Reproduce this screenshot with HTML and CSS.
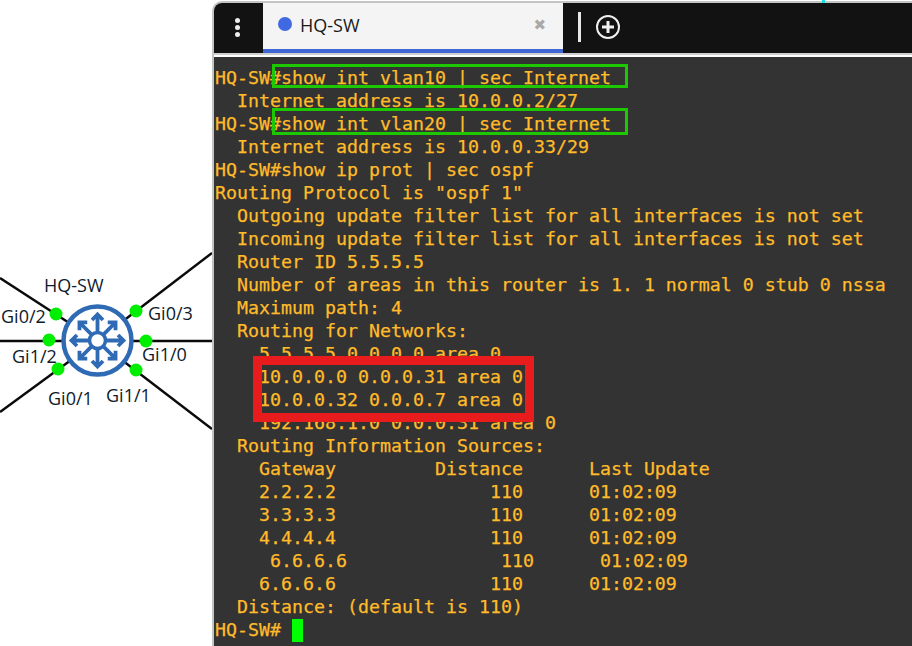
FILE: index.html
```html
<!DOCTYPE html>
<html lang="en">
<head>
<meta charset="utf-8">
<title>HQ-SW</title>
<link rel="stylesheet" href="styles.css">
</head>
<body>
<div class="page">
  <div class="canvas">
    <svg class="topo" width="212" height="646" viewBox="0 0 212 646">
      <g class="links">
        <line x1="0" y1="278" x2="97" y2="341"/>
        <line x1="0" y1="341" x2="212" y2="341"/>
        <line x1="0" y1="412" x2="97" y2="341"/>
        <line x1="212" y1="253" x2="97" y2="341"/>
        <line x1="212" y1="429" x2="97" y2="341"/>
      </g>
      <circle class="ring" cx="97.500" cy="340.500" r="34"/>
      <g class="arrows" transform="translate(97.500 340.500)">
        <path d="M0 -9V-25M-5.500 -20.500L0 -26L5.500 -20.500"/>
        <path transform="rotate(45)" d="M0 -9V-24M-5.500 -20L0 -25.500L5.500 -20"/>
        <path transform="rotate(90)" d="M0 -9V-25M-5.500 -20.500L0 -26L5.500 -20.500"/>
        <path transform="rotate(135)" d="M0 -9V-24M-5.500 -20L0 -25.500L5.500 -20"/>
        <path transform="rotate(180)" d="M0 -9V-25M-5.500 -20.500L0 -26L5.500 -20.500"/>
        <path transform="rotate(225)" d="M0 -9V-24M-5.500 -20L0 -25.500L5.500 -20"/>
        <path transform="rotate(270)" d="M0 -9V-25M-5.500 -20.500L0 -26L5.500 -20.500"/>
        <path transform="rotate(315)" d="M0 -9V-24M-5.500 -20L0 -25.500L5.500 -20"/>
        <circle class="hub" r="8"/>
      </g>
      <g class="ports">
        <circle cx="56" cy="314" r="6.500"/>
        <circle cx="49" cy="340" r="6.500"/>
        <circle cx="58" cy="369" r="6.500"/>
        <circle cx="136" cy="311" r="6.500"/>
        <circle cx="146" cy="341" r="6.500"/>
        <circle cx="136" cy="370" r="6.500"/>
      </g>
      <g class="labels">
        <text x="44" y="292">HQ-SW</text>
        <text x="1" y="323">Gi0/2</text>
        <text x="148" y="320">Gi0/3</text>
        <text x="12" y="363">Gi1/2</text>
        <text x="142" y="361">Gi1/0</text>
        <text x="48" y="405">Gi0/1</text>
        <text x="106" y="402">Gi1/1</text>
      </g>
    </svg>
  </div>
  <div class="window">
    <div class="bar">
      <div class="menu"><span></span><span></span><span></span></div>
      <div class="tab">
        <span class="tab-dot"></span>
        <span class="tab-title">HQ-SW</span>
        <span class="tab-close">✖</span>
      </div>
      <div class="bar-sep"></div>
      <svg class="add" width="26" height="26" viewBox="0 0 26 26">
        <circle cx="13" cy="13" r="11" />
        <path d="M13 7V19M7 13H19"/>
      </svg>
    </div>
    <div class="terminal">
<pre class="screen">HQ-SW#show int vlan10 | sec Internet
  Internet address is 10.0.0.2/27
HQ-SW#show int vlan20 | sec Internet
  Internet address is 10.0.0.33/29
HQ-SW#show ip prot | sec ospf
Routing Protocol is "ospf 1"
  Outgoing update filter list for all interfaces is not set
  Incoming update filter list for all interfaces is not set
  Router ID 5.5.5.5
  Number of areas in this router is 1. 1 normal 0 stub 0 nssa
  Maximum path: 4
  Routing for Networks:
    5.5.5.5 0.0.0.0 area 0
    10.0.0.0 0.0.0.31 area 0
    10.0.0.32 0.0.0.7 area 0
    192.168.1.0 0.0.0.31 area 0
  Routing Information Sources:
    Gateway         Distance      Last Update
    2.2.2.2              110      01:02:09
    3.3.3.3              110      01:02:09
    4.4.4.4              110      01:02:09
     6.6.6.6              110      01:02:09
    6.6.6.6              110      01:02:09
  Distance: (default is 110)
HQ-SW# <span class="cursor"></span></pre>
      <div class="mark mark-a"></div>
      <div class="mark mark-b"></div>
      <div class="mark-red"></div>
    </div>
  </div>
  <div class="speck"></div>
</div>
</body>
</html>
```
FILE: styles.css
```css
html, body { margin: 0; padding: 0; background: #fff; }
.page {
  position: relative;
  display: flex;
  width: 912px;
  height: 646px;
  overflow: hidden;
  background: #fff;
}
.canvas { width: 212px; flex: none; }
.topo { display: block; }
.links line { stroke: #0b0b0b; stroke-width: 2.500; }
.ring { fill: #fff; stroke: #2f6ab5; stroke-width: 4.500; }
.arrows path { fill: none; stroke: #2f6ab5; stroke-width: 3.800; }
.hub { fill: #fff; stroke: #2f6ab5; stroke-width: 3.500; }
.ports circle { fill: #00ee00; }
.labels text { font: 18px "Open Sans", "Noto Sans", sans-serif; fill: #0f1a2b; }

.window {
  flex: 1;
  display: flex;
  flex-direction: column;
  margin-top: 1px;
  border-top: 2px solid #c4c4c4;
  border-left: 2px solid #c4c4c4;
  border-top-left-radius: 10px;
  background: #fff;
  overflow: hidden;
}
.bar {
  display: flex;
  align-items: center;
  height: 50px;
  flex: none;
  background: #121212;
}
.menu {
  box-sizing: border-box;
  width: 49px;
  padding: 0 2px 2px 0;
  display: flex;
  flex-direction: column;
  align-items: center;
  gap: 2px;
  flex: none;
}
.menu span { width: 5px; height: 5px; border-radius: 50%; background: #ececec; }
.tab {
  box-sizing: border-box;
  width: 300px;
  height: 50px;
  flex: none;
  display: flex;
  align-items: center;
  padding: 0 17px 2px 15px;
  background: #f4f4f4;
  border-bottom: 4px solid #3f67d6;
}
.tab-dot { width: 14px; height: 14px; border-radius: 50%; background: #4169e1; margin: 0 8px 2px 0; }
.tab-title { font: 18px "Open Sans", "Noto Sans", sans-serif; color: #1a1a1a; flex: 1; }
.tab-close { font: 15px "DejaVu Sans", sans-serif; color: #a9a9a9; }
.bar-sep { width: 3px; height: 30px; background: #e8e8e8; margin: 0 0 2px 15px; flex: none; }
.add { margin: 0 0 3px 14px; flex: none; }
.add circle { fill: none; stroke: #f0f0f0; stroke-width: 2; }
.add path { stroke: #f0f0f0; stroke-width: 3; fill: none; }

.terminal {
  position: relative;
  flex: 1;
  margin-top: 4px;
  background: #333333;
  box-shadow: 0 -2px 0 0 #fff, 0 -4px 0 0 #d0d0d0;
}
.screen {
  margin: 0;
  padding: 9px 0 0 1px;
  font: 18.270px/23px "DejaVu Sans Mono", monospace;
  color: #ffbb2a;
  -webkit-text-stroke: 0.25px #ffbb2a;
  white-space: pre;
}
.cursor {
  display: inline-block;
  width: 11px;
  height: 23px;
  background: #00ff00;
  vertical-align: -6px;
}
.mark {
  position: absolute;
  left: 58px;
  width: 356px;
  box-sizing: border-box;
  border: 3px solid #1ec800;
}
.mark-a { top: 7px; height: 24px; }
.mark-b { top: 51px; height: 27px; }
.mark-red {
  position: absolute;
  left: 39px;
  top: 299px;
  width: 281px;
  height: 66px;
  box-sizing: border-box;
  border: 9px solid #e81c1c;
}
.speck {
  position: absolute;
  left: 822px;
  top: 0;
  width: 3px;
  height: 3px;
  background: #18e0e0;
}
```
